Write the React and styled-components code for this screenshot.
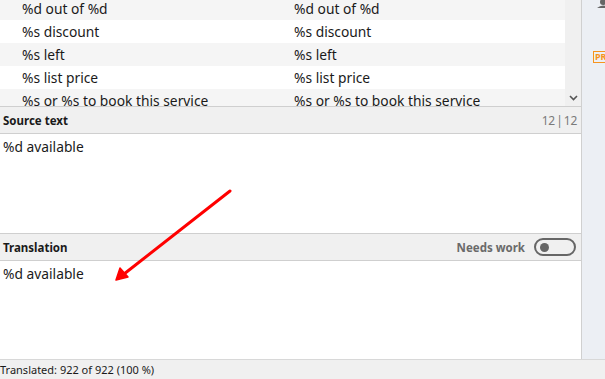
import React from "react";
import styled, { createGlobalStyle } from "styled-components";

const Global = createGlobalStyle`
  *, *::before, *::after { box-sizing: border-box; }
  html, body { margin: 0; padding: 0; }
  body {
    font-family: "Noto Sans", "Open Sans", sans-serif;
    font-size: 13.8px;
    color: #1a1a1a;
    background: #ffffff;
  }
`;

const Window = styled.div`
  width: 605px;
  height: 379px;
  display: flex;
  flex-direction: column;
  overflow: hidden;
  position: relative;
`;

const Body = styled.div`
  flex: 1;
  display: flex;
  min-height: 0;
`;

const Main = styled.div`
  width: 582px;
  display: flex;
  flex-direction: column;
  border-right: 1px solid #d0d0d0;
`;

const Sidebar = styled.div`
  flex: 1;
  background: #eceff4;
  position: relative;
  overflow: hidden;
`;

const TableWrap = styled.div`
  flex: 0 0 107px;
  display: flex;
  border-bottom: 1px solid #cfcfcf;
  overflow: hidden;
`;

const Rows = styled.div`
  flex: 1;
  margin-top: -3px;
`;

const Row = styled.div`
  height: 23px;
  display: grid;
  grid-template-columns: 272px 1fr;
  align-items: center;
  background: ${(p) => (p.$alt ? "#f5f5f5" : "#ffffff")};
`;

const Cell = styled.div`
  padding-left: 22px;
  white-space: nowrap;
  overflow: hidden;
`;

const Scrollbar = styled.div`
  width: 16px;
  background: #f0f0f0;
  display: flex;
  flex-direction: column;
  justify-content: flex-end;
  align-items: center;
  padding-bottom: 5px;
`;

const Header = styled.div`
  flex: 0 0 27px;
  background: #f0f0f0;
  border-bottom: 1px solid #cfcfcf;
  display: flex;
  align-items: center;
  justify-content: space-between;
  padding: 0 4px 0 3px;
  font-size: 11.5px;
`;

const HeaderTitle = styled.span`
  font-weight: 700;
`;

const Counter = styled.span`
  color: #7a7a7a;
  font-size: 12px;
  letter-spacing: -0.3px;
  word-spacing: -1.5px;
`;

const TextPane = styled.div`
  flex: ${(p) => (p.$grow ? "1 1 auto" : "0 0 100px")};
  padding: 3px 3px;
  background: #ffffff;
  border-bottom: ${(p) => (p.$border ? "1px solid #cfcfcf" : "none")};
`;

const Needs = styled.div`
  display: flex;
  align-items: center;
  gap: 9px;
  font-weight: 700;
  color: #6a6a6a;
  margin-right: 1px;
`;

const Toggle = styled.div`
  width: 42px;
  height: 18px;
  border: 2px solid #666;
  border-radius: 10px;
  display: flex;
  align-items: center;
  padding-left: 4px;
`;

const Knob = styled.div`
  width: 9px;
  height: 9px;
  border-radius: 50%;
  background: #666;
`;

const Status = styled.div`
  flex: 0 0 20px;
  background: #f0f0f0;
  border-top: 1px solid #d8d8d8;
  display: flex;
  align-items: center;
  font-size: 11px;
`;

const Badge = styled.div`
  position: absolute;
  left: 11px;
  top: 51px;
  height: 12px;
  padding: 0 1px;
  border: 1px solid #f7941d;
  color: #f7941d;
  font-size: 9px;
  font-weight: 700;
  line-height: 10px;
  white-space: nowrap;
`;

const UserIcon = styled.svg`
  position: absolute;
  left: 15px;
  top: -2px;
`;

const Arrow = styled.svg`
  position: absolute;
  left: 0;
  top: 0;
  pointer-events: none;
`;

const rows = [
  "%d out of %d",
  "%s discount",
  "%s left",
  "%s list price",
  "%s or %s to book this service",
];

export default function App() {
  return (
    <Window>
      <Global />
      <Body>
        <Main>
          <TableWrap>
            <Rows>
              {rows.map((r, i) => (
                <Row key={r} $alt={i % 2 === 0}>
                  <Cell>{r}</Cell>
                  <Cell>{r}</Cell>
                </Row>
              ))}
            </Rows>
            <Scrollbar>
              <svg width="9" height="6" viewBox="0 0 9 6">
                <path d="M1 1 L4.5 4.5 L8 1" fill="none" stroke="#555" strokeWidth="1.6" />
              </svg>
            </Scrollbar>
          </TableWrap>
          <Header>
            <HeaderTitle>Source text</HeaderTitle>
            <Counter>12 | 12</Counter>
          </Header>
          <TextPane $border>%d available</TextPane>
          <Header>
            <HeaderTitle>Translation</HeaderTitle>
            <Needs>
              Needs work
              <Toggle>
                <Knob />
              </Toggle>
            </Needs>
          </Header>
          <TextPane $grow>%d available</TextPane>
        </Main>
        <Sidebar>
          <UserIcon width="12" height="10" viewBox="0 0 12 10">
            <circle cx="6" cy="4" r="3" fill="#666" />
            <path d="M0 10 Q6 5 12 10 Z" fill="#666" />
          </UserIcon>
          <Badge>PRO</Badge>
        </Sidebar>
      </Body>
      <Status>Translated: 922 of 922 (100 %)</Status>
      <Arrow width="605" height="379">
        <line x1="230" y1="191" x2="124" y2="274" stroke="#ff0000" strokeWidth="3" strokeLinecap="round" />
        <path d="M116 280 L120 268 L128 277 Z" fill="#ff0000" stroke="#ff0000" strokeWidth="1.5" strokeLinejoin="round" />
      </Arrow>
    </Window>
  );
}
